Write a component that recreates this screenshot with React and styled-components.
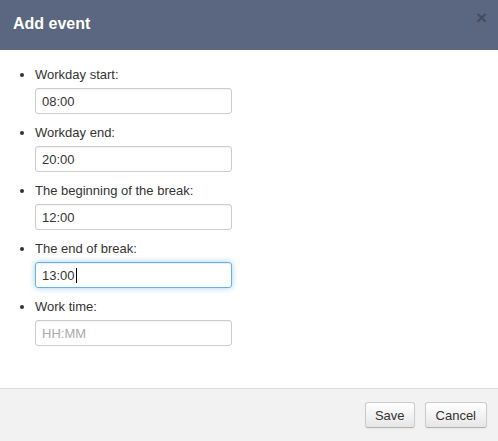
import React from 'react';
import styled, { createGlobalStyle } from 'styled-components';

const GlobalStyle = createGlobalStyle`
  html, body {
    margin: 0;
    padding: 0;
    background: #fff;
  }
  body {
    font-family: 'Liberation Sans', Arial, sans-serif;
    color: #333;
  }
`;

const Dialog = styled.div`
  width: 498px;
  height: 441px;
  display: flex;
  flex-direction: column;
  background: #fff;
`;

const Header = styled.div`
  height: 50px;
  flex: none;
  background: #5b6680;
  display: flex;
  align-items: center;
  justify-content: space-between;
  padding: 0 11px 0 13px;
  box-sizing: border-box;
  .title {
    font-size: 16px;
    font-weight: bold;
    color: #fff;
    margin-top: -2px;
  }
`;

const Close = styled.span`
  font-size: 19px;
  font-weight: bold;
  line-height: 1;
  color: #000;
  opacity: 0.25;
  align-self: flex-start;
  margin-top: 8px;
`;

const Body = styled.div`
  flex: 1;
  padding-top: 15px;
`;

const List = styled.ul`
  margin: 0;
  padding: 0 0 0 35px;
  list-style: disc;
  font-size: 13px;
`;

const Item = styled.li`
  margin-bottom: 9px;
  .label {
    line-height: 20px;
    height: 20px;
    margin-bottom: 3px;
  }
`;

const Field = styled.div`
  width: 197px;
  height: 26px;
  box-sizing: border-box;
  border: 1px solid ${(p) => (p.$focused ? '#66afe9' : '#ccc')};
  border-radius: 3px;
  padding: 0 6px;
  display: flex;
  align-items: center;
  font-size: 13px;
  color: ${(p) => (p.$placeholder ? '#aaa' : '#333')};
  box-shadow: ${(p) =>
    p.$focused
      ? 'inset 0 1px 1px rgba(0,0,0,.075), 0 0 6px rgba(102,175,233,.6)'
      : 'inset 0 1px 1px rgba(0,0,0,.05)'};
`;

const Caret = styled.span`
  display: inline-block;
  width: 1px;
  height: 15px;
  background: #000;
  margin-left: 1px;
`;

const Footer = styled.div`
  height: 53px;
  flex: none;
  box-sizing: border-box;
  border-top: 1px solid #ddd;
  background: #f2f2f2;
  display: flex;
  justify-content: flex-end;
  align-items: flex-start;
  gap: 10px;
  padding: 13px 11px 0 0;
`;

const Button = styled.button`
  height: 26px;
  padding: 0 ${(p) => p.$pad || 10}px;
  font-family: 'Liberation Sans', Arial, sans-serif;
  font-size: 13px;
  color: #333;
  background: linear-gradient(#ffffff, #e6e6e6);
  border: 1px solid #ccc;
  border-bottom-color: #b3b3b3;
  border-radius: 3px;
  box-shadow: inset 0 1px 0 rgba(255,255,255,.2), 0 1px 2px rgba(0,0,0,.05);
`;

const fields = [
  { label: 'Workday start:', value: '08:00' },
  { label: 'Workday end:', value: '20:00' },
  { label: 'The beginning of the break:', value: '12:00' },
  { label: 'The end of break:', value: '13:00', focused: true },
  { label: 'Work time:', placeholder: 'HH:MM' },
];

export default function App() {
  return (
    <>
      <GlobalStyle />
      <Dialog>
        <Header>
          <div className="title">Add event</div>
          <Close>×</Close>
        </Header>
        <Body>
          <List>
            {fields.map((f) => (
              <Item key={f.label}>
                <div className="label">{f.label}</div>
                <Field $focused={f.focused} $placeholder={!f.value}>
                  {f.value || f.placeholder}
                  {f.focused && <Caret />}
                </Field>
              </Item>
            ))}
          </List>
        </Body>
        <Footer>
          <Button $pad={9}>Save</Button>
          <Button $pad={10}>Cancel</Button>
        </Footer>
      </Dialog>
    </>
  );
}
